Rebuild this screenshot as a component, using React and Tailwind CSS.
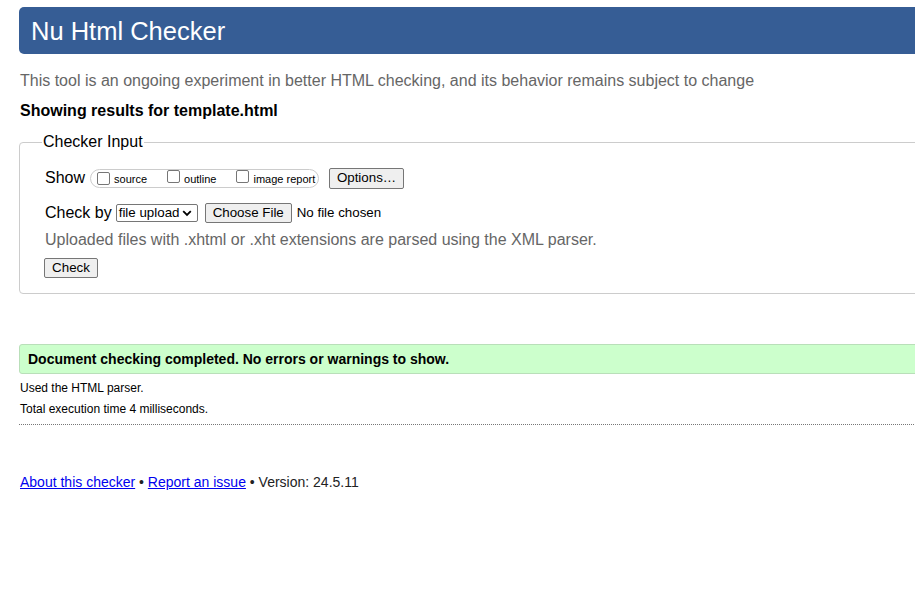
import React from "react";

function Checkbox() {
  return (
    <span className="inline-block w-[13px] h-[13px] border border-[#767676] rounded-[2px] bg-white shrink-0" />
  );
}

function Btn({ children, className = "" }) {
  return (
    <button
      type="button"
      className={`bg-[#efefef] border border-[#767676] rounded-[2px] text-[13.333px] leading-[16px] text-black px-[4px] whitespace-nowrap ${className}`}
    >
      {children}
    </button>
  );
}

export default function App() {
  return (
    <div className="w-[915px] h-[611px] overflow-hidden bg-white text-black font-['Liberation_Sans',Arial,sans-serif]">
      <div className="w-[1000px] pl-[19px]">
        {/* header */}
        <div className="mt-[7px] h-[47px] bg-[#365d95] rounded-l-[5px] flex items-center pl-[12px]">
          <h1 className="text-[25.5px] leading-[30px] text-white">Nu Html Checker</h1>
        </div>

        <p className="mt-[18px] pl-px text-[16px] leading-[18px] text-[#666]">
          This tool is an ongoing experiment in better HTML checking, and its behavior remains subject to change
        </p>
        <p className="mt-[12px] pl-px text-[16px] leading-[18px] font-bold">
          Showing results for template.html
        </p>

        {/* checker input */}
        <fieldset className="mt-[13px] border border-[#ccc] rounded-[4px] pl-[22px] pb-[14px]">
          <legend className="px-px text-[16px] leading-[18px]">Checker Input</legend>

          <div className="mt-[16px] ml-[3px] h-[22px] flex items-center">
            <span className="text-[16px] leading-[18px]">Show</span>
            <span className="ml-[5px] h-[19px] w-[229px] border border-[#ccc] rounded-full flex items-center pl-[6px] text-[11px] leading-[13px]">
              <Checkbox />
              <span className="ml-[4px] mt-[3px]">source</span>
              <span className="ml-[20px]"><Checkbox /></span>
              <span className="ml-[4px] mt-[3px]">outline</span>
              <span className="ml-[20px]"><Checkbox /></span>
              <span className="ml-[4px] mt-[3px]">image report</span>
            </span>
            <Btn className="ml-[10px] h-[21px] w-[75px]">Options…</Btn>
          </div>

          <div className="mt-[14px] ml-[3px] h-[20px] flex items-center">
            <span className="text-[16px] leading-[18px]">Check by</span>
            <span className="ml-[4px] h-[18px] w-[82px] border border-[#767676] rounded-[2px] flex items-center pl-[2px] text-[13.333px] leading-[16px]">
              file upload
              <svg className="ml-[3px]" width="10" height="7" viewBox="0 0 10 7">
                <path d="M1.2 1.2 L5 5 L8.8 1.2" fill="none" stroke="#000" strokeWidth="1.8" />
              </svg>
            </span>
            <Btn className="ml-[7px] h-[20px] w-[87px]">Choose File</Btn>
            <span className="ml-[5px] text-[13.333px] leading-[16px]">No file chosen</span>
          </div>

          <p className="mt-[8px] ml-[3px] text-[16px] leading-[18px] text-[#666]">
            Uploaded files with .xhtml or .xht extensions are parsed using the XML parser.
          </p>

          <div className="mt-[6px] ml-[2px]">
            <Btn className="h-[20px] w-[54px]">Check</Btn>
          </div>
        </fieldset>

        {/* result */}
        <div className="mt-[50px] h-[30px] border border-[#b9dfb9] bg-[#ccffcc] rounded-[3px] flex items-center pl-[8px]">
          <span className="text-[14px] leading-[16px] font-bold">
            Document checking completed. No errors or warnings to show.
          </span>
        </div>
        <p className="mt-[7px] pl-px text-[12px] leading-[14px]">Used the HTML parser.</p>
        <p className="mt-[7px] pl-px text-[12px] leading-[14px]">Total execution time 4 milliseconds.</p>
        <div className="mt-[8px] border-t border-dotted border-[#777]" />

        <p className="mt-[49px] pl-px text-[14px] leading-[16px] text-[#222]">
          <a href="#" className="text-[#0000ee] underline">About this checker</a>
          {" • "}
          <a href="#" className="text-[#0000ee] underline">Report an issue</a>
          {" • Version: 24.5.11"}
        </p>
      </div>
    </div>
  );
}
